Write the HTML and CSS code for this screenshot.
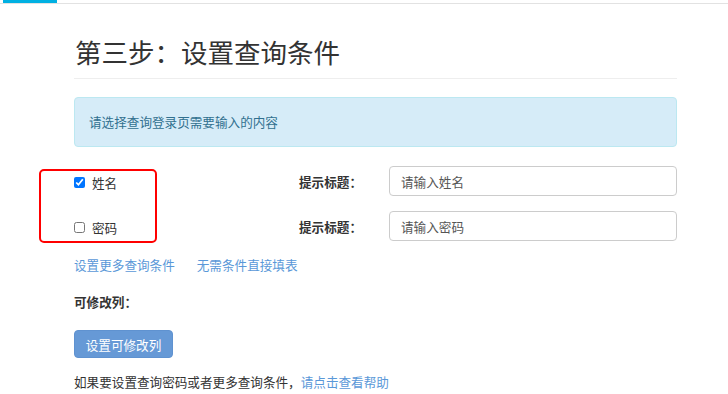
FILE: index.html
```html
<!DOCTYPE html>
<html lang="zh-CN">
<head>
    <meta charset="UTF-8">
    <meta name="viewport" content="width=device-width, initial-scale=1.0">
    <title>设置查询条件</title>
    <link rel="stylesheet" href="styles.css">
</head>
<body>

<div class="tabs">
    <span class="tab active"></span>
</div>

<div class="container">
    <h2 class="page-title">第三步：设置查询条件</h2>

    <div class="alert">请选择查询登录页需要输入的内容</div>

    <div class="fields">
        <div class="field-row">
            <label class="check"><input type="checkbox" checked> 姓名</label>
            <span class="hint-label">提示标题：</span>
            <input type="text" class="text-input" placeholder="请输入姓名">
        </div>
        <div class="field-row">
            <label class="check"><input type="checkbox"> 密码</label>
            <span class="hint-label">提示标题：</span>
            <input type="text" class="text-input" placeholder="请输入密码">
        </div>
        <div class="highlight"></div>
    </div>

    <div class="links">
        <a href="#">设置更多查询条件</a>
        <a href="#">无需条件直接填表</a>
    </div>

    <div class="section-label">可修改列：</div>

    <button class="btn-primary">设置可修改列</button>

    <p class="help">如果要设置查询密码或者更多查询条件，<a href="#">请点击查看帮助</a></p>
</div>

</body>
</html>
```

FILE: styles.css
```css
body {
    margin: 0;
    font-family: "Noto Sans CJK SC", "Noto Sans", sans-serif;
    font-size: 12.6px;
    color: #333;
    background-color: #fff;
}

.tabs {
    height: 3px;
    border-bottom: 1px solid #e2e2e2;
    padding-left: 3px;
}

.tab {
    display: block;
    width: 54px;
    height: 3px;
}

.tab.active {
    background-color: #00b0e2;
}

.container {
    margin-left: 74px;
    width: 603px;
}

.page-title {
    margin: 33px 0 0;
    padding: 0 0 11px 1px;
    font-size: 26.5px;
    font-weight: normal;
    line-height: 30px;
    color: #333;
    border-bottom: 1px solid #eee;
}

.alert {
    margin-top: 18px;
    padding: 17px 14px;
    line-height: 14px;
    color: #31708f;
    background-color: #d6ecf8;
    border: 1px solid #bce8f1;
    border-radius: 4px;
}

.fields {
    position: relative;
    margin-top: 19px;
    display: flex;
    flex-direction: column;
    gap: 15px;
}

.field-row {
    display: grid;
    grid-template-columns: 225px 1fr 288px;
    align-items: center;
    height: 30px;
}

.check {
    display: flex;
    align-items: center;
    gap: 7px;
    padding-top: 2px;
}

.field-row:last-of-type .check {
    padding-top: 0;
}

.check input {
    margin: 0;
    width: 11px;
    height: 11px;
}

.hint-label {
    font-weight: bold;
}

.text-input {
    box-sizing: border-box;
    height: 30px;
    padding: 0 11px;
    font-family: inherit;
    font-size: 12.6px;
    color: #555;
    border: 1px solid #ccc;
    border-radius: 4px;
}

.text-input::placeholder {
    color: #555;
}

.highlight {
    position: absolute;
    top: 3px;
    left: -35px;
    width: 118px;
    height: 74px;
    box-sizing: border-box;
    border: 2px solid #f00;
    border-radius: 5px;
}

.links {
    margin-top: 15px;
    line-height: 18px;
    display: flex;
    gap: 22px;
}

a {
    color: #5a98d8;
    text-decoration: none;
}

.section-label {
    margin-top: 19px;
    line-height: 18px;
    font-weight: bold;
}

.btn-primary {
    display: block;
    margin-top: 19px;
    height: 28px;
    width: 99px;
    padding: 0;
    font-family: inherit;
    font-size: 12.6px;
    color: #fff;
    background-color: #6699d6;
    border: 1px solid #5f92d0;
    border-radius: 4px;
}

.help {
    margin: 15px 0 0;
    line-height: 18px;
}
```
